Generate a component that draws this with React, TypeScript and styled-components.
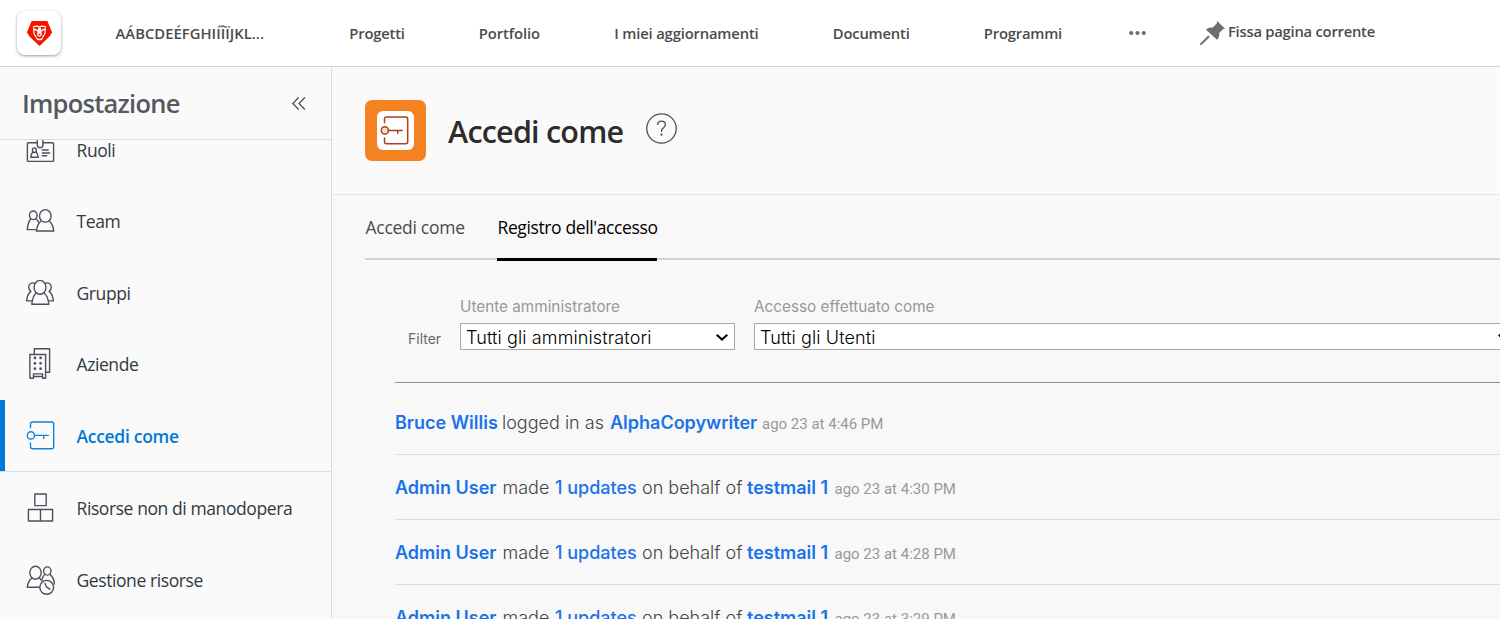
import React from 'react';
import styled, { createGlobalStyle } from 'styled-components';

const clean = '"Open Sans", "Noto Sans", sans-serif';
const nova = 'Inter, Roboto, sans-serif';

const GlobalStyle = createGlobalStyle`
  *, *::before, *::after { box-sizing: border-box; }
  body { margin: 0; font-family: ${clean}; background: #f8f8f8; overflow: hidden; }
  svg { display: block; overflow: visible; flex: none; }
`;

const Page = styled.div`
  height: 619px;
  display: flex;
  flex-direction: column;
  overflow: hidden;
`;

const TopBar = styled.header`
  height: 67px;
  flex: none;
  display: flex;
  align-items: flex-start;
  padding-left: 17px;
  background: #fff;
  border-bottom: 1px solid #d3d3d3;
`;

const LogoTile = styled.div`
  width: 44px;
  height: 44px;
  margin-top: 11px;
  padding: 10px 0 0 9.5px;
  background: #fff;
  border-radius: 8px;
  box-shadow: 0 1px 3px rgba(0, 0, 0, 0.4);
`;

const Nav = styled.nav`
  display: flex;
  margin: 23px 0 0 54.5px;
`;

const NavItem = styled.a<{ $width: number; $tracking?: number }>`
  width: ${(p) => p.$width}px;
  font-size: 14.8px;
  line-height: 21px;
  font-weight: 600;
  letter-spacing: ${(p) => p.$tracking ?? -0.2}px;
  color: #4b4b4b;
  white-space: nowrap;
`;

const MoreDots = styled.div`
  width: 71px;
  padding-top: 30px;
`;

const PinLink = styled.a`
  display: flex;
  gap: 3px;
  padding-top: 21px;
  font-size: 14.8px;
  line-height: 21px;
  font-weight: 600;
  letter-spacing: -0.25px;
  color: #4b4b4b;
`;

const Body = styled.div`
  flex: 1;
  min-height: 0;
  display: flex;
`;

const Sidebar = styled.aside`
  width: 332px;
  flex: none;
  display: flex;
  flex-direction: column;
  background: #fafafa;
  border-right: 1px solid #dcdcdc;
`;

const SidebarHead = styled.div`
  height: 73px;
  flex: none;
  display: flex;
  justify-content: space-between;
  padding: 18px 26.5px 0 22px;
  border-bottom: 1px solid #dcdcdc;
`;

const SidebarTitle = styled.h2`
  margin: 0;
  font-size: 25.5px;
  line-height: 36px;
  font-weight: 600;
  letter-spacing: -0.75px;
  color: #55595f;
`;

const Collapse = styled.div`
  padding-top: 11.5px;
`;

const MenuViewport = styled.div`
  flex: 1;
  min-height: 0;
  overflow: hidden;
`;

const Menu = styled.div`
  margin-top: -26px;
`;

const MenuRow = styled.div<{ $height: number; $active?: boolean }>`
  height: ${(p) => p.$height}px;
  width: 330px;
  display: flex;
  gap: 20.5px;
  padding: 21px 0 0 26px;
  font-size: 17.5px;
  line-height: 30px;
  letter-spacing: ${(p) => (p.$active ? -0.3 : -0.41)}px;
  color: ${(p) => (p.$active ? '#0078d7' : '#323940')};
  font-weight: ${(p) => (p.$active ? 600 : 400)};
  ${(p) =>
    p.$active &&
    `border-bottom: 1px solid #dcdcdc;
     background: linear-gradient(#0078d7, #0078d7) left / 5px 100% no-repeat;`}
  svg { color: ${(p) => (p.$active ? '#0f84dc' : '#4b505c')}; }
`;

const Main = styled.main`
  flex: 1;
  min-width: 0;
  overflow: hidden;
`;

const TitleBar = styled.div`
  height: 128px;
  display: flex;
  padding: 33px 0 0 33px;
  background: #fafafa;
  border-bottom: 1px solid #e6e6e6;
`;

const TitleTile = styled.div`
  width: 61px;
  height: 61px;
  padding: 11px 12px;
  background: #f58220;
  border-radius: 7px;
`;

const TileInner = styled.div`
  width: 37px;
  height: 39px;
  padding: 5px 3px;
  background: #fff;
  border-radius: 6px;
`;

const Title = styled.h1`
  width: 198px;
  margin: 10px 0 0 22px;
  font-size: 30.5px;
  line-height: 42px;
  font-weight: 600;
  letter-spacing: -0.78px;
  color: #2c2c2c;
`;

const HelpIcon = styled.div`
  padding-top: 13px;
`;

const Tabs = styled.div`
  height: 66px;
  margin-left: 33px;
  display: flex;
  gap: 32px;
  background: linear-gradient(#d4d4d4, #d4d4d4) 0 63px / 100% 2px no-repeat;
`;

const Tab = styled.div<{ $active?: boolean }>`
  height: 66px;
  padding-top: 17px;
  font-size: 17.5px;
  line-height: 31px;
  letter-spacing: ${(p) => (p.$active ? -0.38 : -0.28)}px;
  white-space: nowrap;
  color: ${(p) => (p.$active ? '#000' : '#4b4b4b')};
  width: ${(p) => (p.$active ? 160 : 100)}px;
  ${(p) => p.$active && 'background: linear-gradient(#000, #000) 0 63px / 100% 3px no-repeat;'}
  text-indent: 0.5px;
`;

const Report = styled.section`
  margin-left: 63px;
  font-family: ${nova};
`;

const FilterBar = styled.div`
  height: 122px;
  padding: 36px 0 0 13px;
  display: flex;
  border-bottom: 1px solid #8f8f8f;
`;

const FilterCaption = styled.div`
  width: 52px;
  flex: none;
  padding-top: 32px;
  font-size: 14px;
  line-height: 20px;
  color: #6a6a6a;
`;

const Field = styled.label<{ $width: number }>`
  width: ${(p) => p.$width}px;
  flex: none;
  margin-right: 19px;
`;

const FieldLabel = styled.div`
  height: 26px;
  font-size: 15.3px;
  line-height: 20px;
  color: #989898;
`;

const SelectBox = styled.div`
  height: 27px;
  display: flex;
  align-items: center;
  justify-content: space-between;
  padding: 1px 6.5px 0 5px;
  background: #fff;
  border: 1px solid #a9a9a9;
  font-size: 18px;
  line-height: 25px;
  letter-spacing: 0.12px;
  font-weight: 350;
  color: #000;
`;

const Entry = styled.div<{ $first?: boolean }>`
  height: ${(p) => (p.$first ? 72 : 65)}px;
  padding-top: ${(p) => (p.$first ? 25 : 18)}px;
  border-bottom: 1px solid #dcdcdc;
  display: flex;
  align-items: baseline;
  font-size: 18px;
  line-height: 30px;
  white-space: nowrap;
`;

const Person = styled.a<{ $width: number }>`
  width: ${(p) => p.$width}px;
  font-weight: 600;
  color: #1a73e8;
`;

const Action = styled.span<{ $width: number }>`
  width: ${(p) => p.$width}px;
  font-weight: 300;
  color: #444;
`;

const Count = styled.a`
  width: 87px;
  font-weight: 450;
  color: #1a73e8;
`;

const Stamp = styled.span`
  font-family: Roboto, sans-serif;
  font-size: 15px;
  font-weight: 400;
  color: #989898;
`;

const Icon = ({ children }: { children: React.ReactNode }) => (
  <svg width="30" height="30" viewBox="0 0 30 30" fill="none" stroke="currentColor" strokeWidth="1.4" strokeLinecap="round" strokeLinejoin="round">
    {children}
  </svg>
);

const RolesIcon = () => (
  <Icon>
    <rect x="1.4" y="7.8" width="26.2" height="18.6" rx="0.8" />
    <path d="M11.3 3v7a2.8 2.8 0 0 0 5.6 0V3" fill="#fafafa" />
    <ellipse cx="8.4" cy="15.2" rx="2" ry="2.3" />
    <path d="M6.9 17.2C5.2 18.3 5 20.4 4.7 22.3h7.6c-.3-1.9-.6-4-2.3-5.1" />
    <path d="M16.3 15h6M16.3 18h7.4M16.3 20.8h4.4" />
  </Icon>
);

const TeamIcon = () => (
  <Icon>
    <ellipse cx="7.3" cy="9.3" rx="3.8" ry="4.3" />
    <path d="M4.8 12.8C2.4 15.4 1.7 19.3 1.2 23.6h9.3M9.8 12.8c1.2.9 2.3 2.2 2.9 3.6" />
    <ellipse cx="19.3" cy="9.9" rx="5.8" ry="6.3" />
    <path d="M15.4 14.8C12 17.4 10.9 21 10.4 25h17.4c-.5-4-1.6-7.6-4.8-10.2" />
  </Icon>
);

const GroupsIcon = () => (
  <Icon>
    <path d="M8.6 5.4C5.5 3.9 2.7 6 2.7 9.2c0 1.9.9 3.5 2.2 4.2C2 15.6 1 19.2.6 22.9h5.9" />
    <path d="M19.4 5.4c3.1-1.5 5.9.6 5.9 3.8 0 1.9-.9 3.5-2.2 4.2 2.9 2.2 3.9 5.8 4.3 9.5h-4.9" />
    <ellipse cx="14" cy="9.3" rx="6" ry="6.9" />
    <path d="M10.2 14.7C7.3 17.4 6.2 21.6 5.8 26.3h17c-.4-4.7-1.5-8.9-5-11.6" />
  </Icon>
);

const CompaniesIcon = () => (
  <Icon>
    <path d="M8.3 5.2V-.2h15.3v23.5h-3.8" />
    <path d="M3.9 5.5h15.7v23.7h-3v-4.3H7.5v4.3H3.9zM8.5 27.5h7" />
    <g fill="currentColor" stroke="none">
      {[8.9, 14.3, 19.7].map((y) => (
        <g key={y}>
          <circle cx="8.9" cy={y} r="1.35" />
          <circle cx="14.6" cy={y} r="1.35" />
        </g>
      ))}
    </g>
  </Icon>
);

const KeyShape = ({ fill = 'none' }: { fill?: string }) => (
  <>
    <path d="M4.5 6.6V3a2 2 0 0 1 2-2h19.2a2 2 0 0 1 2 2v22.7a2 2 0 0 1-2 2H6.5a2 2 0 0 1-2-2V22" />
    <circle cx="4.9" cy="14.4" r="3.6" fill={fill} />
    <path d="M8.5 14.4h13.8M17.7 14.6v2.7" />
  </>
);

const ResourcesIcon = () => (
  <Icon>
    <path d="M8.8 1h11.4v11.6H8.8zM2.4 16.5h24.2V28H2.4zM14.5 16.5V28" />
  </Icon>
);

const ManagementIcon = () => (
  <Icon>
    <ellipse cx="9.5" cy="7.7" rx="5.7" ry="6.5" />
    <path d="M6 12.9C3 15 1.8 18.3 1.2 22.2H13M13.2 12.9c1.2.8 2 1.7 2.7 2.9" />
    <ellipse cx="21.3" cy="6" rx="3.7" ry="4.1" />
    <path d="M19 9.3c-1.6 1.2-2.4 2.9-2.9 4.9M23.8 9.3c2.9 1.8 4.3 5.7 4.6 9.7" />
    <circle cx="20.7" cy="22.3" r="6.9" />
    <path d="M19 18.5l1.7 3.7 3.2 2" />
  </Icon>
);

const menu = [
  { label: 'Ruoli', icon: <RolesIcon />, height: 71 },
  { label: 'Team', icon: <TeamIcon />, height: 72 },
  { label: 'Gruppi', icon: <GroupsIcon />, height: 71 },
  { label: 'Aziende', icon: <CompaniesIcon />, height: 72 },
  { label: 'Accedi come', icon: <Icon><KeyShape /></Icon>, height: 72, active: true },
  { label: 'Risorse non di manodopera', icon: <ResourcesIcon />, height: 72 },
  { label: 'Gestione risorse', icon: <ManagementIcon />, height: 72 },
];

const Chevron = () => (
  <svg width="12" height="7" viewBox="0 0 12 7" fill="none" stroke="#000" strokeWidth="2">
    <path d="M0.7 0.7L6 5.6l5.3-4.9" />
  </svg>
);

const Logo = () => (
  <svg width="25" height="25" viewBox="0 0 25 25">
    <path d="M4.6 0H20.4L25 11.2 22.5 15.500 12.5 25 2.5 15.500 0 11.2z" fill="#f21400" />
    <g fill="none" stroke="#fff" strokeLinecap="round" strokeLinejoin="round">
      <path d="M6.300 5.800l3.400-.7 2.800.8 2.800-.8 3.400.7" strokeWidth="1.300" />
      <path d="M6.700 8l3.800 1.700M18.300 8l-3.800 1.700" strokeWidth="1.400" />
      <path d="M6.700 7.800l.3 4.700 2.200 3.600M18.300 7.800l-.3 4.700-2.200 3.600" strokeWidth="1.200" />
      <path d="M11 9.800l-.2 4.200 1.700 1.400 1.700-1.400-.2-4.200" strokeWidth="1.200" />
      <path d="M9.600 17.200l1.300 1.300h3.200l1.300-1.300" strokeWidth="1.300" />
    </g>
    <path d="M11 6.800h3v6h-3z" fill="#fff" />
  </svg>
);

const updates = ['4:30', '4:28', '3:29'];

export default function App() {
  return (
    <Page>
      <GlobalStyle />
      <TopBar>
        <LogoTile><Logo /></LogoTile>
        <Nav>
          <NavItem $width={233.8} $tracking={0.03}>AÁBCDEÉFGHIÍÎÏJKL...</NavItem>
          <NavItem $width={129.5}>Progetti</NavItem>
          <NavItem $width={135.5} $tracking={-0.1}>Portfolio</NavItem>
          <NavItem $width={218.5} $tracking={-0.17}>I miei aggiornamenti</NavItem>
          <NavItem $width={151}>Documenti</NavItem>
          <NavItem $width={145.2}>Programmi</NavItem>
        </Nav>
        <MoreDots>
          <svg width="17" height="6" viewBox="0 0 17 6" fill="#6e6e6e">
            <circle cx="2.2" cy="3" r="2.1" />
            <circle cx="8.5" cy="3" r="2.1" />
            <circle cx="14.8" cy="3" r="2.1" />
          </svg>
        </MoreDots>
        <PinLink>
          <svg width="25" height="25" viewBox="0 0 25 25" fill="#6e6e6e">
            <path d="M17.2 0L25 7.7l-2.1.5-3.7 3.7c.5 2.2-.2 4.7-2.2 6.8L6 8.7c2.1-1.9 4.5-2.6 6.8-2.1l3.9-4z" />
            <path d="M8.200 14.400l1.600 1.600-8.500 8.100H0v-1.300z" />
          </svg>
          Fissa pagina corrente
        </PinLink>
      </TopBar>
      <Body>
        <Sidebar>
          <SidebarHead>
            <SidebarTitle>Impostazione</SidebarTitle>
            <Collapse>
              <svg width="13" height="13" viewBox="0 0 13 13" fill="none" stroke="#4b505c" strokeWidth="1.3">
                <path d="M6.7 0.5L0.8 6.5l5.9 6M12.9 0.5L7 6.5l5.9 6" />
              </svg>
            </Collapse>
          </SidebarHead>
          <MenuViewport>
            <Menu>
              {menu.map((m) => (
                <MenuRow key={m.label} $height={m.height} $active={m.active}>
                  {m.icon}
                  {m.label}
                </MenuRow>
              ))}
            </Menu>
          </MenuViewport>
        </Sidebar>
        <Main>
          <TitleBar>
            <TitleTile>
              <TileInner>
                <svg width="30" height="30" viewBox="0 0 30 30" fill="none" stroke="#a8401c" strokeWidth="1.5" strokeLinecap="round">
                  <KeyShape fill="#fbd9c8" />
                </svg>
              </TileInner>
            </TitleTile>
            <Title>Accedi come</Title>
            <HelpIcon>
              <svg width="31" height="31" viewBox="0 0 31 31" fill="none" stroke="#4b505c" strokeWidth="1.3">
                <circle cx="15.5" cy="15.5" r="14.7" />
                <path d="M11.6 12c0-2.4 1.7-3.9 3.9-3.9s3.9 1.4 3.9 3.6c0 3-3.9 3-3.9 6.3v1" />
                <circle cx="15.5" cy="21.7" r="1.1" fill="#4b505c" stroke="none" />
              </svg>
            </HelpIcon>
          </TitleBar>
          <Tabs>
            <Tab>Accedi come</Tab>
            <Tab $active>Registro dell'accesso</Tab>
          </Tabs>
          <Report>
            <FilterBar>
              <FilterCaption>Filter</FilterCaption>
              <Field $width={275}>
                <FieldLabel>Utente amministratore</FieldLabel>
                <SelectBox>Tutti gli amministratori<Chevron /></SelectBox>
              </Field>
              <Field $width={763}>
                <FieldLabel>Accesso effettuato come</FieldLabel>
                <SelectBox>Tutti gli Utenti<Chevron /></SelectBox>
              </Field>
            </FilterBar>
            <Entry $first>
              <Person $width={107}>Bruce Willis</Person>
              <Action $width={108}>logged in as</Action>
              <Person $width={152}>AlphaCopywriter</Person>
              <Stamp>ago 23 at 4:46 PM</Stamp>
            </Entry>
            {updates.map((time) => (
              <Entry key={time}>
                <Person $width={107.5}>Admin User</Person>
                <Action $width={52.5}>made</Action>
                <Count>1 updates</Count>
                <Action $width={105}>on behalf of</Action>
                <Person $width={87.5}>testmail 1</Person>
                <Stamp>ago 23 at {time} PM</Stamp>
              </Entry>
            ))}
          </Report>
        </Main>
      </Body>
    </Page>
  );
}
